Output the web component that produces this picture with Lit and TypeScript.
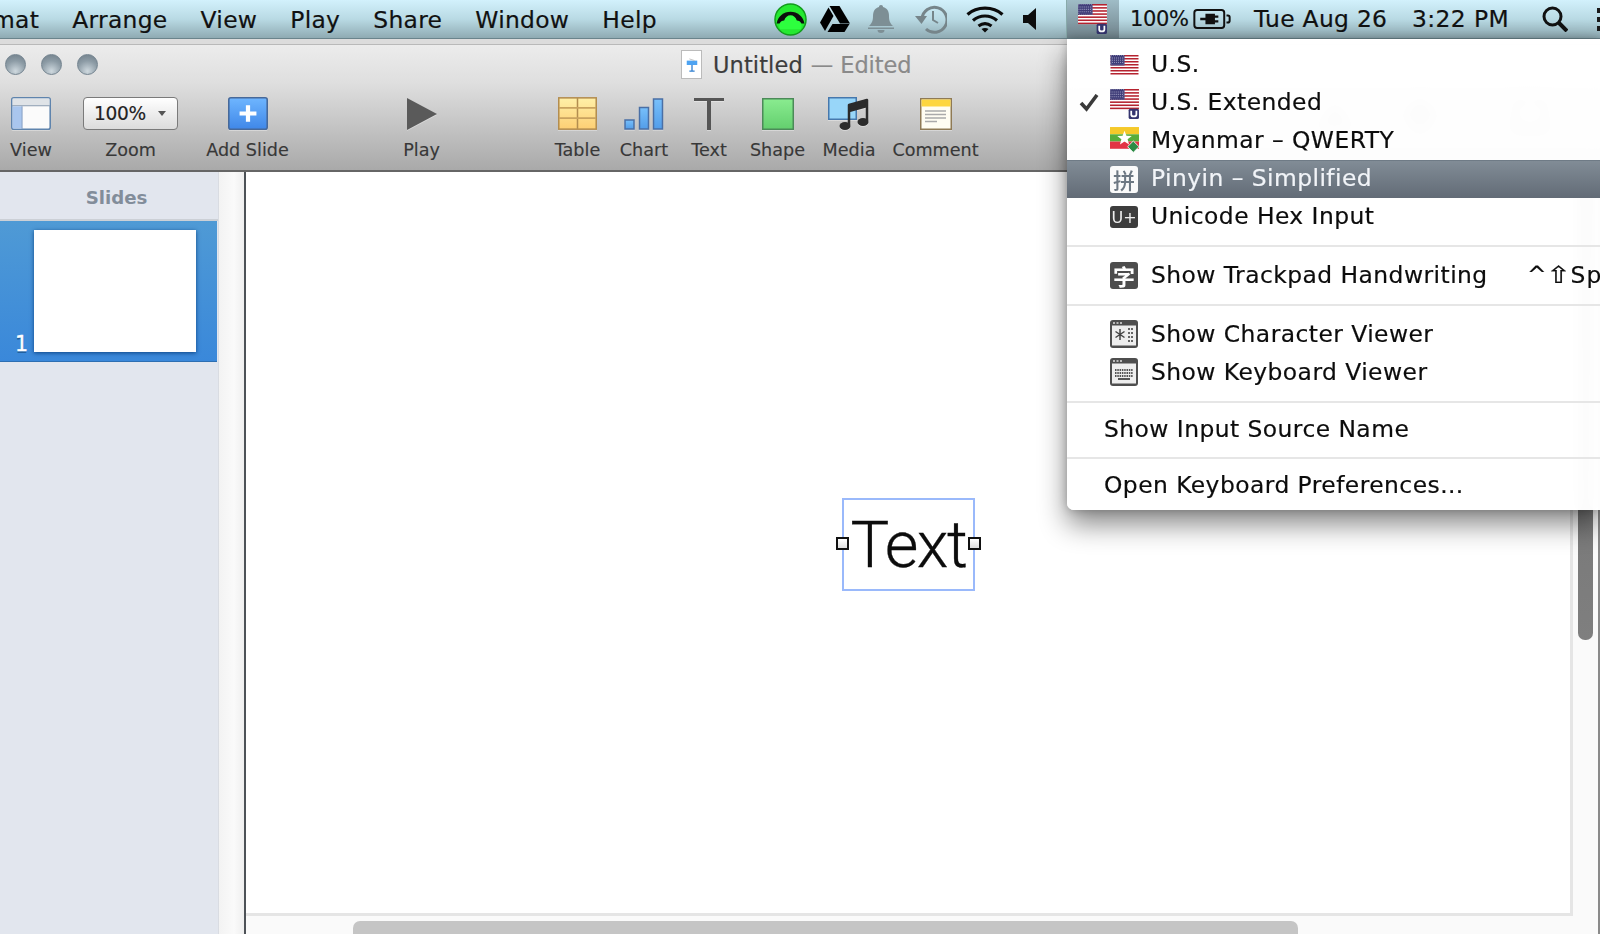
import { LitElement, html, css, svg } from "lit";
import { customElement } from "lit/decorators.js";

const usFlag = (badge = false) => html`<svg class="flag" viewBox="0 0 28 ${badge ? 30 : 20}" width="29" height="${badge ? 31 : 20}">
  <rect width="28" height="19.5" fill="#fff"/>
  ${[0, 3, 6, 9, 12, 15, 18].map((y) => svg`<rect y="${y}" width="28" height="1.5" fill="#b5222f"/>`)}
  <rect width="14" height="10.5" fill="#3f3d78"/>
  <rect x=".5" y=".5" width="13" height="9.5" fill="none" stroke="#7d7ba4" stroke-width="1" stroke-dasharray="1 1"/>
  <path d="M1.5 3h11M1.5 5.2h11M1.5 7.4h11" stroke="#9a99bd" stroke-width="1" stroke-dasharray="1 1"/>
  ${badge ? svg`<rect x="18" y="19" width="10" height="10" rx="1.5" fill="#35356f"/>
  <path d="M20.5 21v3.6q0 1.9 2.5 1.9t2.5-1.9V21" fill="none" stroke="#fff" stroke-width="1.7"/>` : ""}
</svg>`;

const myanmarFlag = html`<svg class="flag" viewBox="0 0 28 26" width="29" height="27">
  <rect width="28" height="7" fill="#f5c92a"/><rect y="7" width="28" height="7" fill="#58ad3a"/><rect y="14" width="28" height="7" fill="#e23344"/>
  <path d="M14 3.5l1.9 4.9 5.1.2-4 3.2 1.4 5-4.4-2.9-4.4 2.9 1.4-5-4-3.2 5.1-.2z" fill="#fff"/>
  <path d="M22.5 13.5l5.5 5.5-5.5 5.5-5.5-5.5z" fill="#2c8b45" stroke="#fff" stroke-width=".8"/>
</svg>`;

const charIcon = html`<svg viewBox="0 0 28 28" width="28" height="28">
  <rect width="28" height="28" rx="3" fill="#4e4e4e"/><rect x="2" y="5.5" width="24" height="20" fill="#eeeeee"/>
  <path d="M3 3h2M6.5 3h2M10 3h2" stroke="#ddd" stroke-width="1.5"/>
  <path d="M10 9v11M5.5 11.5l9 6M14.5 11.5l-9 6" stroke="#444" stroke-width="1.5"/>
  <path d="M18 9h6M18 13h6M18 17h6M18 21h6" stroke="#666" stroke-width="2" stroke-dasharray="2 1"/>
</svg>`;

const kbdIcon = html`<svg viewBox="0 0 28 28" width="28" height="28">
  <rect width="28" height="28" rx="3" fill="#4e4e4e"/><rect x="2" y="5.5" width="24" height="20" fill="#eeeeee"/>
  <path d="M3 3h2M6.5 3h2M10 3h2" stroke="#ddd" stroke-width="1.5"/>
  <path d="M5 12h18M5 15h18M5 18h18" stroke="#555" stroke-width="2" stroke-dasharray="1.5 .8"/>
  <path d="M8 21h12" stroke="#555" stroke-width="2"/>
</svg>`;

interface Tool { label: string; icon: unknown; }

const tools: Tool[] = [
  { label: "View", icon: html`<svg viewBox="0 0 38 32" width="40" height="33" preserveAspectRatio="none"><rect x=".75" y=".75" width="36.5" height="30.5" rx="2" fill="#fbfbfb" stroke="#5f84ad" stroke-width="1.5"/><rect x="1.5" y="1.5" width="35" height="7" fill="#dfe3e7"/><path d="M1 8.5h36" stroke="#8a9db1"/><rect x="1.5" y="9" width="9" height="21.5" fill="#a9c6ee"/><path d="M10.5 9v22" stroke="#8aa3c6"/></svg>` },
  { label: "Zoom", icon: html`<div class="zoom"><span>100%</span><i></i></div>` },
  { label: "Add Slide", icon: html`<svg viewBox="0 0 38 32" width="40" height="33" preserveAspectRatio="none"><defs><linearGradient id="ad" x1="0" y1="0" x2="0" y2="1"><stop offset="0" stop-color="#6fb6ff"/><stop offset="1" stop-color="#3f87e8"/></linearGradient></defs><rect x=".75" y=".75" width="36.5" height="30.5" rx="2" fill="url(#ad)" stroke="#47699a" stroke-width="1.5"/><path d="M19 8v16M11 16h16" stroke="#fff" stroke-width="4"/></svg>` },
  { label: "Play", icon: html`<svg viewBox="0 0 32 32" width="32" height="32"><path d="M1 0L31 16L1 32z" fill="#5a5a5a"/></svg>` },
  { label: "Table", icon: html`<svg viewBox="0 0 38 32" width="39" height="33"><defs><linearGradient id="tb" x1="0" y1="0" x2="0" y2="1"><stop offset="0" stop-color="#fff0a8"/><stop offset="1" stop-color="#fdcf74"/></linearGradient></defs><rect x=".75" y=".75" width="36.5" height="30.5" fill="url(#tb)" stroke="#b38d4f" stroke-width="1.5"/><path d="M19 1v30" stroke="#b38d4f" stroke-width="1.5"/><path d="M1 10.5h36M1 20.5h36" stroke="#c9a35f" stroke-width="1.5"/></svg>` },
  { label: "Chart", icon: html`<svg viewBox="0 0 40 32" width="40" height="32"><defs><linearGradient id="ch" x1="0" y1="0" x2="0" y2="1"><stop offset="0" stop-color="#78c0fb"/><stop offset="1" stop-color="#529de9"/></linearGradient></defs><g fill="url(#ch)" stroke="#4a6fa5" stroke-width="1.5"><rect x="1" y="22" width="9" height="9"/><rect x="15.5" y="9.5" width="9" height="21.5"/><rect x="29.5" y="1" width="9" height="30"/></g></svg>` },
  { label: "Text", icon: html`<svg viewBox="0 0 30 32" width="30" height="32"><path d="M0 0h30v3H17v29h-4V3H0z" fill="#555"/></svg>` },
  { label: "Shape", icon: html`<svg viewBox="0 0 32 32" width="32" height="32"><defs><linearGradient id="sh" x1="0" y1="0" x2="0" y2="1"><stop offset="0" stop-color="#8aec90"/><stop offset="1" stop-color="#63cf6e"/></linearGradient></defs><rect x=".75" y=".75" width="30.5" height="30.5" fill="url(#sh)" stroke="#4b8a58" stroke-width="1.5"/></svg>` },
  { label: "Media", icon: html`<svg viewBox="0 0 42 34" width="42" height="34"><rect x=".75" y=".75" width="27.5" height="21.5" fill="#98d6f9" stroke="#4678ad" stroke-width="1.5"/><path d="M21 8v20M39 3v21M21 8l18-5v6l-18 5z" fill="#2b2b2b" stroke="#2b2b2b" stroke-width="2.5" stroke-linejoin="round"/><ellipse cx="17" cy="29" rx="5.5" ry="4" fill="#2b2b2b"/><ellipse cx="35" cy="25" rx="5.5" ry="4" fill="#2b2b2b"/></svg>` },
  { label: "Comment", icon: html`<svg viewBox="0 0 32 32" width="32" height="32"><rect x=".75" y=".75" width="30.5" height="30.5" fill="#fffdf2" stroke="#8f7a55" stroke-width="1.5"/><rect x="1.5" y="1.5" width="29" height="7" fill="#fdd640"/><path d="M5 13h21M5 16.5h21M5 20h21M5 23.5h12" stroke="#aaa" stroke-width="1.5"/></svg>` },
];

@customElement("app-root")
export class AppRoot extends LitElement {
  static styles = css`
    :host { display: block; position: relative; width: 1600px; height: 934px; overflow: hidden; background: #fff;
      font-family: "DejaVu Sans", sans-serif; color: #111; }
    .menubar { height: 39px; display: flex; align-items: center; box-sizing: border-box;
      background: linear-gradient(#d2f1fc 0%, #b9dae4 50%, #8fabb3 100%); border-bottom: 1px solid #6a848c; font-size: 23.4px; -webkit-text-stroke: .2px; }
    .menus { display: flex; gap: 33px; margin-left: -45px; padding-top: 2px; white-space: nowrap; letter-spacing: .3px; }
    .status { margin-left: auto; display: flex; align-items: center; height: 38px; white-space: nowrap; }
    .ic { display: flex; align-items: center; justify-content: center; }
    .green { margin-right: 13px; }
    .drive { margin-right: 18px; }
    .bell { margin-right: 21px; }
    .tm { margin-right: 19px; }
    .wifi { margin-right: 19px; }
    .vol { margin-right: 29px; }
    .flagbtn { width: 53px; height: 38px; box-sizing: border-box; padding: 4px 0 0 11px;
      background: linear-gradient(#9fbcc6, #71858d); border-left: 1px solid #8aa; }
    .pct { margin-left: 11px; font-size: 21px; width: 63px; letter-spacing: -.4px; }
    .batt { margin-right: 23px; }
    .clock { width: 158px; letter-spacing: .3px; }
    .time { width: 130px; letter-spacing: .4px; }
    .search { margin-right: 29px; }
    .extras { width: 3px; height: 38px; overflow: hidden; display: flex; flex-direction: column; gap: 4px; padding-top: 8px; box-sizing: border-box; }
    .extras i { display: block; height: 5px; background: #1a1a1a; flex: none; }

    .strip { height: 5px; background: #dcdcdc; border-bottom: 1px solid #b9b9b9; }
    .window { height: 889px; display: flex; flex-direction: column; }
    .toolbar { height: 127px; flex: none; box-sizing: border-box; background: linear-gradient(#ececec, #dfdfdf 30%, #a9a9a9);
      border-bottom: 2px solid #666; display: flex; flex-direction: column; }
    .title-row { height: 52px; flex: none; box-sizing: border-box; padding-bottom: 13px; display: flex; align-items: center; }
    .lights { display: flex; gap: 15px; margin-left: 5px; }
    .light { width: 21px; height: 21px; box-sizing: border-box; border-radius: 50%; border: 1px solid #73838f;
      background: radial-gradient(circle at 50% 85%, #cfd9df, #8d9ca6 55%, #6f7d88); }
    .title { display: flex; align-items: center; margin-left: 583px; font-size: 22.5px; color: #3c3c3c; letter-spacing: .1px; white-space: nowrap; -webkit-text-stroke: .2px; }
    .doc { width: 21px; height: 29px; margin-right: 11px; box-sizing: border-box; background: #fff; border: 1px solid #bbb; display: flex; align-items: center; justify-content: center; }
    .edited { color: #8a8a8a; margin-left: 8px; letter-spacing: -.1px; }
    .tools { display: grid; grid-template-columns: 62px 137px 97px 251px 61px 72px 58px 79px 64px 109px 320px 50px 120px 100px; }
    .tool { display: flex; flex-direction: column; align-items: center; white-space: nowrap; font-size: 17.6px; color: #383838; -webkit-text-stroke: .15px; }
    .tool-ic { height: 33px; display: flex; align-items: center; justify-content: center; }
    .tool-ic svg { display: block; filter: drop-shadow(0 1px 0 rgba(255,255,255,.35)); }
    .tool-lb { margin-top: 9px; line-height: 22px; }
    .zoom { width: 95px; height: 33px; box-sizing: border-box; border: 1.5px solid #7a7a7a; border-radius: 4px;
      background: linear-gradient(#fff, #dcdcdc); display: flex; align-items: center; font-size: 18.6px; color: #222; padding-left: 10px; }
    .zoom span { width: 64px; letter-spacing: -.3px; }
    .zoom i { width: 0; height: 0; border-left: 4.5px solid transparent; border-right: 4.5px solid transparent; border-top: 5px solid #555; }
    .ghost { display: flex; justify-content: center; height: 33px; align-items: center; opacity: .9; }

    .main { flex: 1; display: flex; min-height: 0; }
    .side { width: 218px; flex: none; background: #e2e6ee; border-right: 1px solid #d9dce2; display: flex; flex-direction: column; }
    .side-h { height: 49px; flex: none; box-sizing: border-box; border-bottom: 2px solid #ccd0d6; display: flex; align-items: center; justify-content: center;
      font-size: 18.2px; font-weight: bold; color: #828d9a; padding: 3px 0 0 15px; }
    .sel { height: 141px; width: 217px; flex: none; box-sizing: border-box; background: linear-gradient(#4f9ad5, #3a88da); border-bottom: 1px solid #2d6fb2;
      display: flex; align-items: flex-end; padding: 9px 0 9px 15px; gap: 9px; }
    .sel b { font-weight: normal; font-size: 20.5px; line-height: 20px; color: #fff; text-shadow: 0 1.5px 0 #1f5f9f; width: 10px; margin-bottom: -2px; -webkit-text-stroke: .3px; }
    .thumb { width: 162px; height: 122px; background: #fff; box-shadow: 0 1px 4px rgba(0,50,110,.8); }
    .gutter { width: 25px; flex: none; background: linear-gradient(90deg, #f3f3f3, #fafafa 60%, #efefef); border-right: 2px solid #4d5257; box-sizing: content-box; }
    .stage { flex: 1; position: relative; background: #fafafa; min-width: 0; border-right: 2px solid #8a8a8a; }
    .slide { width: 1324px; height: 741px; box-sizing: content-box; background: #fff; border-right: 3px solid #e5e5e5; border-bottom: 3px solid #e5e5e5; }
    .hbar { position: absolute; left: 107px; bottom: 0; width: 945px; height: 13px; border-radius: 7px 7px 0 0; background: #c5c5c5; }
    .vbar { position: absolute; right: 5px; top: 0; width: 15px; height: 468px; border-radius: 0 0 7px 7px; background: linear-gradient(#555 0, #6f6f6f 90px, #7f7f7f); }
    .tbox { position: absolute; left: 596px; top: 326px; width: 133px; height: 93px; box-sizing: border-box; border: 2px solid #9ab9fb; display: flex; align-items: center; justify-content: center; padding-top: 2px; }
    .tbox span { font-family: Roboto, "Liberation Sans", sans-serif; font-weight: 300; font-size: 65px; line-height: 1; color: #0c0c0c; letter-spacing: -1.5px; -webkit-text-stroke: .3px; }
    .handle { position: absolute; top: calc(50% - 8px); width: 13px; height: 13px; box-sizing: border-box; border: 2px solid #111; background: linear-gradient(#fff, #ddd); }
    .handle.l { left: -8px; }
    .handle.r { right: -8px; }

    .menu { position: absolute; left: 1067px; top: 39px; width: 533px; height: 471px; box-sizing: border-box; overflow: hidden;
      background: rgba(255,255,255,.975); backdrop-filter: blur(6px); border-radius: 0 0 0 7px; font-size: 23.4px; color: #0c0c0c; letter-spacing: .45px; padding-top: 7px; -webkit-text-stroke: .2px; }
    .menu-shadow { position: absolute; left: 1067px; top: 39px; width: 533px; height: 471px; border-radius: 0 0 0 7px; box-shadow: 0 14px 28px rgba(0,0,0,.48), 0 0 10px rgba(0,0,0,.22); }
    .item { height: 38px; display: flex; align-items: center; white-space: nowrap; }
    .item.up > span { margin-top: -2px; }
    .item.hl { background: linear-gradient(#828d97, #626b76); box-shadow: inset 0 1px 0 #6f7b86; color: #f1f4f8; }
    .check { width: 43px; flex: none; display: flex; justify-content: center; }
    .mi { width: 29px; height: 28px; flex: none; display: flex; align-items: flex-start; margin-right: 12px; }
    .mi svg { display: block; }
    .mi.c { align-items: center; }
    .plain { padding-left: 37px; }
    .sq { width: 28px; height: 27px; border-radius: 3px; display: flex; align-items: center; justify-content: center; box-sizing: border-box; font-family: "Noto Sans CJK SC", sans-serif; letter-spacing: 0; -webkit-text-stroke: 0; }
    .sq.w { background: #fafafa; color: #6d7883; font-size: 22px; font-weight: 500; }
    .sq.d { background: #4d4d4d; color: #fff; font-size: 22px; font-weight: bold; }
    .sq.u { background: #3d3d3d; color: #eee; height: 22px; font-size: 16px; font-family: "DejaVu Sans", sans-serif; }
    .sep { height: 2px; background: #e6e6e6; }
    .s1 { margin: 9px 0 9px; }
    .s2 { margin: 10px 0 9px; }
    .s3 { margin: 10px 0 7px; }
    .s4 { margin: 9px 0 7px; }
    .short { flex: none; margin-left: 14px; font-family: "DejaVu Sans", sans-serif; letter-spacing: 1px; }
    .short i { display: inline-block; font-style: normal; width: 23px; text-align: center; transform: scaleX(1.3); }
    .hw { width: 362px; flex: none; }
  `;

  private statusIcons() {
    return html`
      <div class="ic green"><svg viewBox="0 0 34 34" width="33" height="33">
        <circle cx="17" cy="17" r="16" fill="#25e931" stroke="#129a1c" stroke-width="1.5"/>
        <path d="M2.700 21A14.500 14.500 0 0 1 31.300 21z" fill="#0d0d0d"/>
        <path d="M6.500 27c-2.500-4-.5-9 4-9 1-3.500 3.500-5.500 6.500-5.500s5.500 2 6.500 5.500c4.500 0 6.500 5 4 9z" fill="#2dff3e"/>
      </svg></div>
      <div class="ic drive"><svg viewBox="0 0 30 26" width="30" height="26">
        <path d="M9.500 0h10L30 17.500H20z"/><path d="M8.500 1.500l5 8.500L5 25 0 16.500z"/><path d="M7.500 26l5-8h17l-5 8z"/>
      </svg></div>
      <div class="ic bell"><svg viewBox="0 0 26 28" width="26" height="28" fill="#7d8f95">
        <path d="M13 0c1.300 0 2 .8 2 2 4 1 6 4 6 9 0 5 1 7 4 10H1c3-3 4-5 4-10 0-5 2-8 6-9 0-1.200.700-2 2-2z"/><path d="M0 22.500h26V24H0z"/><path d="M9.500 25h7a3.500 3 0 0 1-7 0z"/>
      </svg></div>
      <div class="ic tm"><svg viewBox="0 0 32 30" width="32" height="30" fill="none" stroke="#76858a" stroke-width="3">
        <path d="M7 15a12.500 12.500 0 1 1 4 10"/><path d="M0 12l6.500 8L12 12z" fill="#76858a" stroke="none"/><path d="M18 7v9l5 3" stroke-width="2"/>
      </svg></div>
      <div class="ic wifi"><svg viewBox="0 0 38 28" width="38" height="28" fill="none" stroke="#0b0b0b" stroke-width="3.200">
        <path d="M1.500 9.500C11 1 27 1 36.500 9.500"/><path d="M7 15.500c7-6 17-6 24 0"/><path d="M12.500 21c4-3 9-3 13 0"/><path d="M15.500 24l3.500 3.500 3.500-3.500c-2-1.300-5-1.300-7 0z" fill="#0b0b0b" stroke="none"/>
      </svg></div>
      <div class="ic vol"><svg viewBox="0 0 14 22" width="14" height="22"><path d="M0 7h5l8-7v22l-8-7H0z" fill="#0d0d0d"/></svg></div>
      <div class="flagbtn">${usFlag(true)}</div>
      <div class="pct">100%</div>
      <div class="ic batt"><svg viewBox="0 0 42 24" width="38" height="22" fill="none" stroke="#111" stroke-width="2.200">
        <rect x="1.500" y="2" width="33" height="20" rx="3"/><path d="M37 8h1.500q2 0 2 2v4q0 2-2 2H37"/>
        <path d="M8 12h7M15 7.500h8v9h-8zM23 9.500h5M23 14.500h5" stroke-width="2.500" fill="#111"/>
      </svg></div>
      <div class="clock">Tue Aug 26</div>
      <div class="time">3:22 PM</div>
      <div class="ic search"><svg viewBox="0 0 26 26" width="26" height="26" fill="none" stroke="#111" stroke-width="3"><circle cx="10.500" cy="10.500" r="8.500"/><path d="M17 17l8 8" stroke-width="4"/></svg></div>
      <div class="extras"><i></i><i></i><i></i></div>
    `;
  }

  render() {
    return html`
      <div class="menubar">
        <div class="menus"><span>Format</span><span>Arrange</span><span>View</span><span>Play</span><span>Share</span><span>Window</span><span>Help</span></div>
        <div class="status">${this.statusIcons()}</div>
      </div>
      <div class="strip"></div>
      <div class="window">
        <div class="toolbar">
          <div class="title-row">
            <div class="lights"><div class="light"></div><div class="light"></div><div class="light"></div></div>
            <div class="title">
              <div class="doc"><svg viewBox="0 0 16 20" width="14" height="18"><path d="M2 5h12v5H2z" fill="#4da3f2"/><path d="M8 10v7M5 17h6" stroke="#2f7fd0" stroke-width="1.5"/><path d="M5 3l6 2" stroke="#bbb"/></svg></div>
              <span>Untitled</span><span class="edited">— Edited</span>
            </div>
          </div>
          <div class="tools">
            ${tools.map((t) => html`<div class="tool"><div class="tool-ic">${t.icon}</div><div class="tool-lb">${t.label}</div></div>`)}
            <div></div>
            <div class="ghost"><svg viewBox="0 0 34 30" width="34" height="30"><path d="M2 28L17 4l15 24z" fill="#666"/></svg></div>
            <div class="ghost"><svg viewBox="0 0 34 34" width="34" height="34"><path d="M17 1l16 16-16 16L1 17z" fill="#666"/></svg></div>
            <div class="ghost"><svg viewBox="0 0 34 30" width="34" height="30"><rect x="2" y="2" width="30" height="26" fill="none" stroke="#666" stroke-width="4"/></svg></div>
          </div>
        </div>
        <div class="main">
          <div class="side">
            <div class="side-h">Slides</div>
            <div class="sel"><b>1</b><div class="thumb"></div></div>
          </div>
          <div class="gutter"></div>
          <div class="stage">
            <div class="slide"></div>
            <div class="tbox"><span>Text</span><div class="handle l"></div><div class="handle r"></div></div>
            <div class="hbar"></div>
            <div class="vbar"></div>
          </div>
        </div>
      </div>
      <div class="menu-shadow"></div>
      <div class="menu">
        <div class="item up"><div class="check"></div><div class="mi c">${usFlag()}</div><span>U.S.</span></div>
        <div class="item up"><div class="check"><svg viewBox="0 0 20 18" width="20" height="18"><path d="M2 9l5.500 6L18 1" fill="none" stroke="#3a3a3a" stroke-width="3.600"/></svg></div><div class="mi">${usFlag(true)}</div><span>U.S. Extended</span></div>
        <div class="item up"><div class="check"></div><div class="mi">${myanmarFlag}</div><span>Myanmar – QWERTY</span></div>
        <div class="item hl up"><div class="check"></div><div class="mi c"><div class="sq w">拼</div></div><span>Pinyin – Simplified</span></div>
        <div class="item up"><div class="check"></div><div class="mi c"><div class="sq u">U+</div></div><span>Unicode Hex Input</span></div>
        <div class="sep s1"></div>
        <div class="item"><div class="check"></div><div class="mi c"><div class="sq d">字</div></div><span class="hw">Show Trackpad Handwriting</span><span class="short">^<i>⇧</i>Space</span></div>
        <div class="sep s2"></div>
        <div class="item"><div class="check"></div><div class="mi c">${charIcon}</div><span>Show Character Viewer</span></div>
        <div class="item"><div class="check"></div><div class="mi c">${kbdIcon}</div><span>Show Keyboard Viewer</span></div>
        <div class="sep s3"></div>
        <div class="item plain"><span>Show Input Source Name</span></div>
        <div class="sep s4"></div>
        <div class="item plain"><span>Open Keyboard Preferences…</span></div>
      </div>
    `;
  }
}
